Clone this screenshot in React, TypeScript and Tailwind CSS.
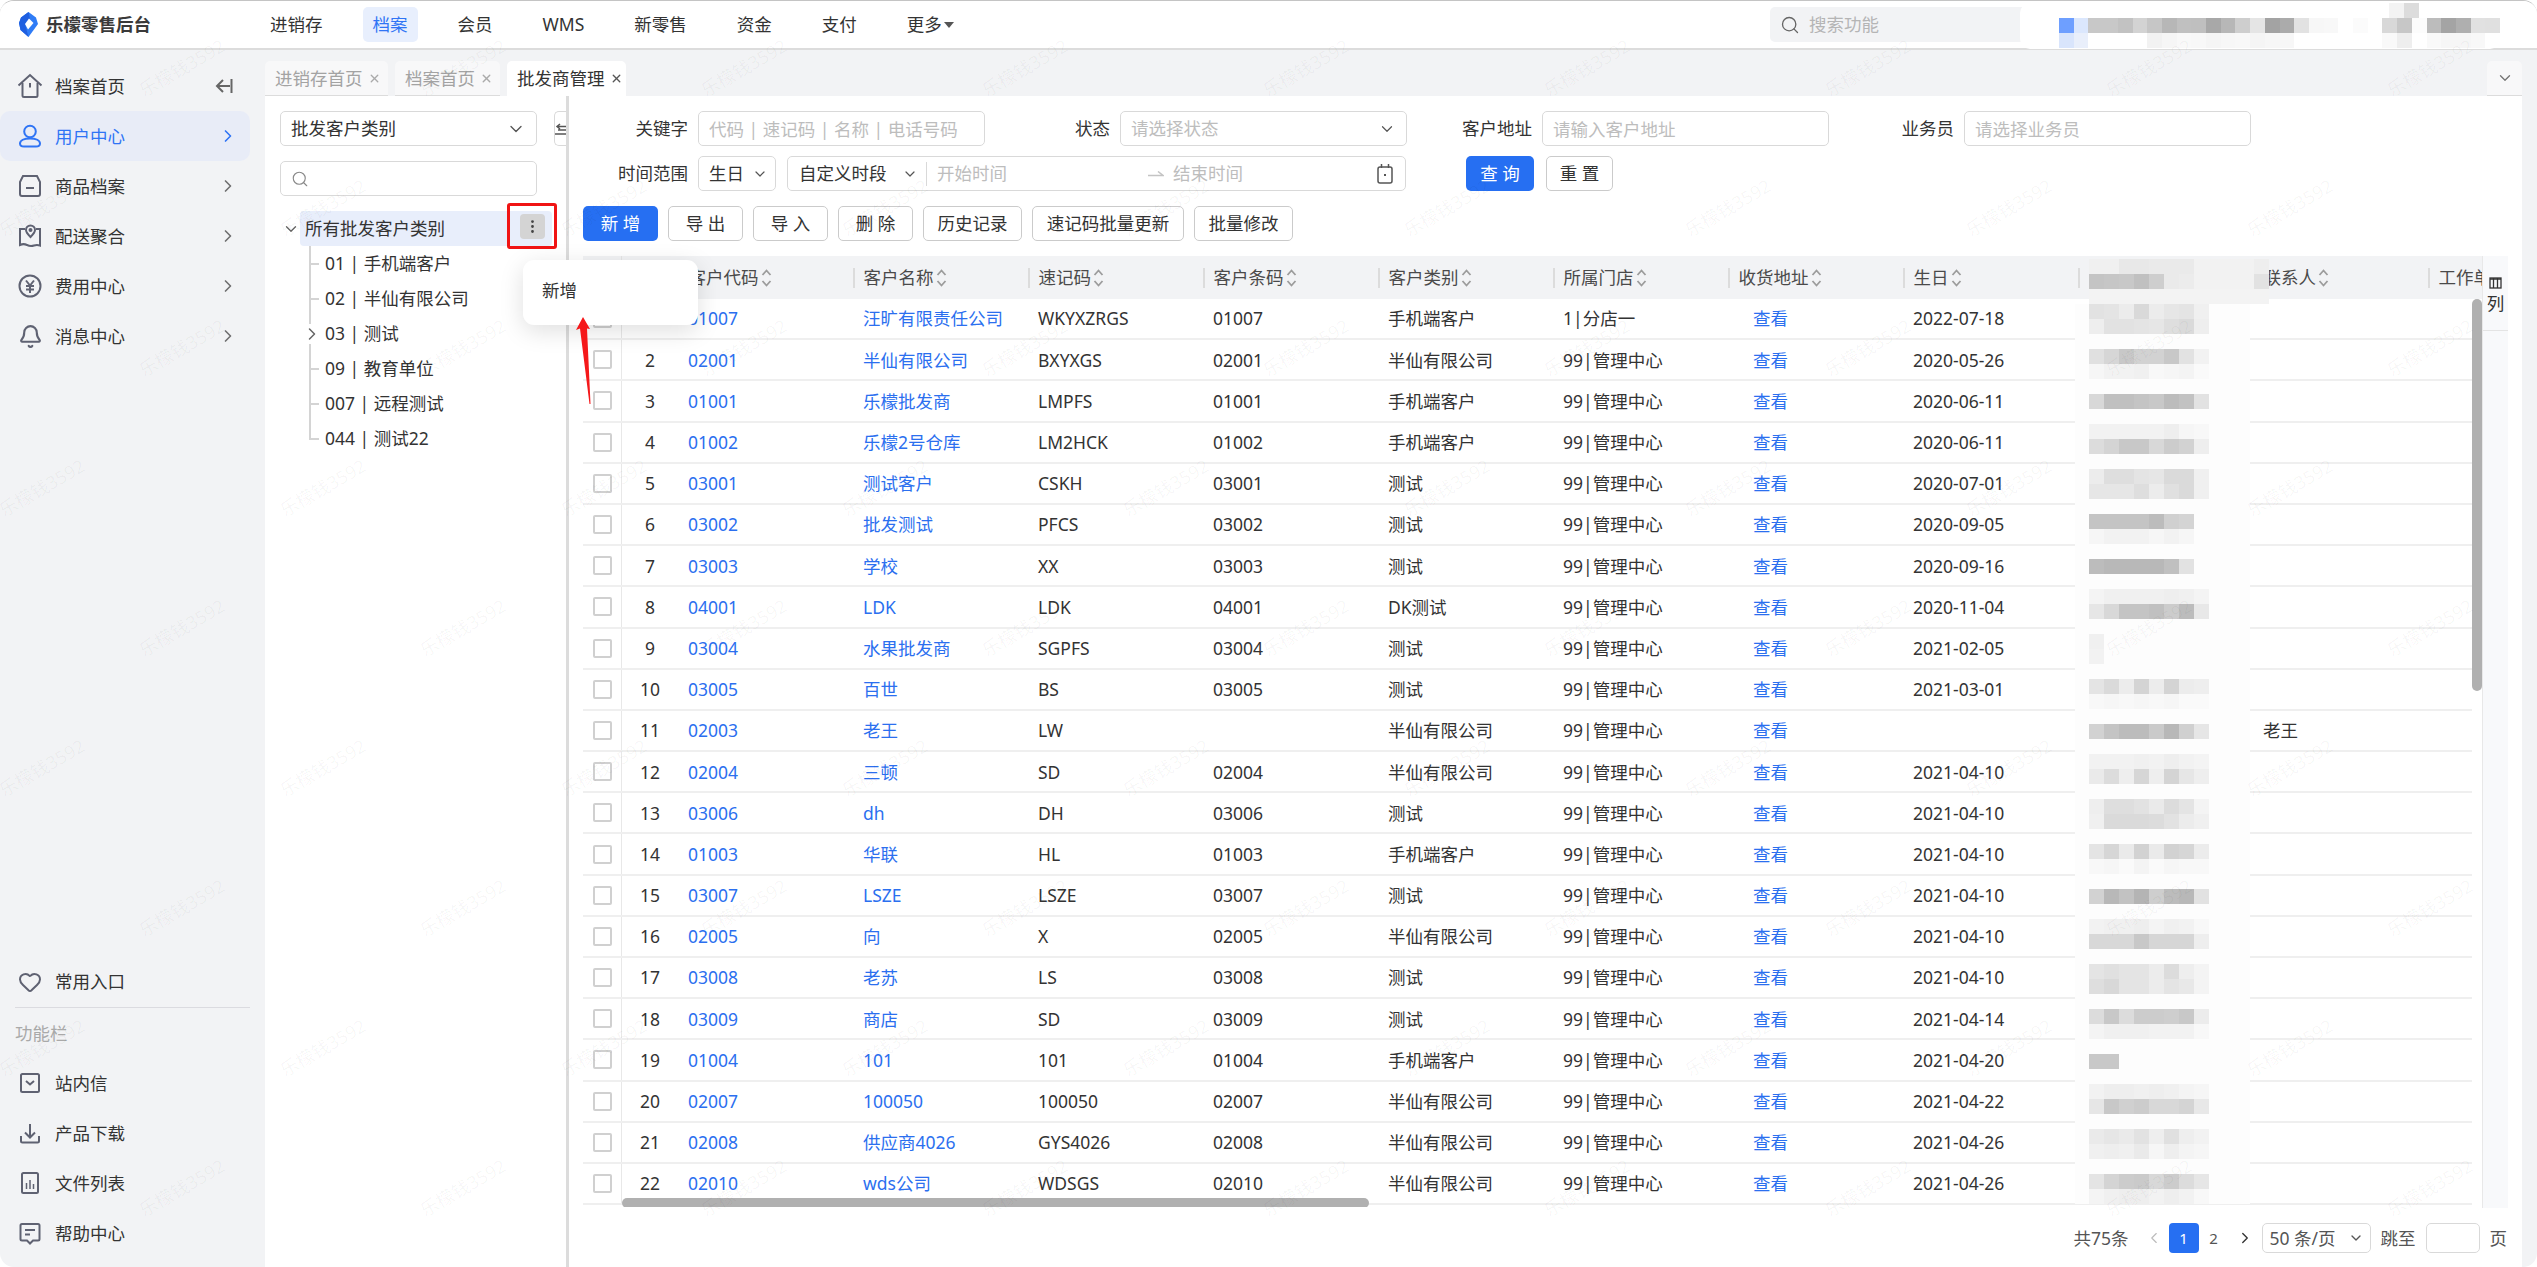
import { Bell, ChevronDown, ChevronRight, ChevronLeft, Heart, MoreVertical, Search, X } from "lucide-react";

const navItems = ["进销存", "档案", "会员", "WMS", "新零售", "资金", "支付"];

const HomeIcon = () => (
  <svg width="26" height="26" viewBox="0 0 26 26" fill="none" stroke="currentColor" strokeWidth="2">
    <path d="M1.5 12.5 13 2l11.5 10.5" />
    <path d="M5.5 10v12.5a1.5 1.5 0 0 0 1.5 1.5h12a1.5 1.5 0 0 0 1.5-1.5V10" />
    <path d="M13 10v4.5" />
  </svg>
);
const UserIcon = () => (
  <svg width="24" height="24" viewBox="0 0 24 24" fill="none" stroke="currentColor" strokeWidth="2">
    <circle cx="12" cy="7.5" r="5.8" />
    <path d="M12 14.5c-6 0-10 2-10 5 0 2.3 2 3 4 3h12c2 0 4-.7 4-3 0-3-4-5-10-5z" />
  </svg>
);
const BoxIcon = () => (
  <svg width="24" height="24" viewBox="0 0 24 24" fill="none" stroke="currentColor" strokeWidth="2">
    <path d="M5 2h14l3 6v12a2 2 0 0 1-2 2H4a2 2 0 0 1-2-2V8z" />
    <path d="M8 14h8" />
  </svg>
);
const MapIcon = () => (
  <svg width="24" height="24" viewBox="0 0 24 24" fill="none" stroke="currentColor" strokeWidth="2">
    <path d="M7 5H2v16c3-1.5 5-1 7 0s4 1.5 7 .5c2-.7 4-.7 6 0V5h-4" />
    <path d="M12.5 13C9.5 10 8 8 8 6a4.5 4.5 0 0 1 9 0c0 2-1.5 4-4.5 7z" />
    <circle cx="12.5" cy="6" r="1" fill="currentColor" />
  </svg>
);
const YenIcon = () => (
  <svg width="24" height="24" viewBox="0 0 24 24" fill="none" stroke="currentColor" strokeWidth="2">
    <circle cx="12" cy="12" r="10.5" />
    <path d="M8 6.5l4 5 4-5M8 12h8M8 15.5h8M12 11.5V19" />
  </svg>
);
const InboxIcon = () => (
  <svg width="24" height="24" viewBox="0 0 24 24" fill="none" stroke="currentColor" strokeWidth="2">
    <rect x="3" y="3" width="18" height="18" rx="1.5" />
    <path d="M8 10l4 3.5 4-3.5" />
  </svg>
);
const DownloadIcon = () => (
  <svg width="24" height="24" viewBox="0 0 24 24" fill="none" stroke="currentColor" strokeWidth="2">
    <path d="M12 3v13M7 11.5l5 5 5-5" />
    <path d="M3 15v5a1.5 1.5 0 0 0 1.5 1.5h15A1.5 1.5 0 0 0 21 20v-5" />
  </svg>
);
const ChartIcon = () => (
  <svg width="24" height="24" viewBox="0 0 24 24" fill="none" stroke="currentColor" strokeWidth="2">
    <rect x="4" y="2" width="16" height="20" rx="1.5" />
    <path d="M8.5 12v6M12 9v9M15.5 13v5" strokeWidth="1.5" />
  </svg>
);
const HelpIcon = () => (
  <svg width="24" height="24" viewBox="0 0 24 24" fill="none" stroke="currentColor" strokeWidth="2">
    <path d="M4 3h16a1.5 1.5 0 0 1 1.5 1.5V18a1.5 1.5 0 0 1-1.5 1.5h-5L12 22.5 9 19.5H4A1.5 1.5 0 0 1 2.5 18V4.5A1.5 1.5 0 0 1 4 3z" />
    <path d="M7 9h10M7 13.5h5" />
  </svg>
);

const Logo = () => (
  <svg width="19" height="25" viewBox="0 0 19 25">
    <path d="M9.5 0 17 5.5l2 6.5-9.5 13L1.5 18 0 11l2-5.5z" fill="#2f7cf6" />
    <path d="M9.5 0 11 7 6 12 9.5 25 1.5 18 0 11l2-5.5z" fill="#1f5fe0" />
    <path d="M10 6.5 14.5 11 9 17.5 6 12z" fill="#fff" />
  </svg>
);

const Sort = () => (
  <svg width="13" height="22" viewBox="0 0 13 22" fill="none" stroke="#9c9c9c" strokeWidth="1.8" className="ml-[1px] shrink-0">
    <path d="M2.5 8 6.5 3.5 10.5 8" />
    <path d="M2.5 14 6.5 18.5 10.5 14" />
  </svg>
);

const sideTop = [
  { label: "用户中心", icon: <UserIcon />, active: true },
  { label: "商品档案", icon: <BoxIcon /> },
  { label: "配送聚合", icon: <MapIcon /> },
  { label: "费用中心", icon: <YenIcon /> },
  { label: "消息中心", icon: <Bell size={25} strokeWidth={2} /> },
];

const sideBottom = [
  { label: "站内信", icon: <InboxIcon /> },
  { label: "产品下载", icon: <DownloadIcon /> },
  { label: "文件列表", icon: <ChartIcon /> },
  { label: "帮助中心", icon: <HelpIcon /> },
];

const treeItems = [
  { label: "01 | 手机端客户" },
  { label: "02 | 半仙有限公司" },
  { label: "03 | 测试", arrow: true },
  { label: "09 | 教育单位" },
  { label: "007 | 远程测试" },
  { label: "044 | 测试22", last: true },
];

const headers = ["客户代码", "客户名称", "速记码", "客户条码", "客户类别", "所属门店", "收货地址", "生日", "电话", "联系人", "工作单位"];

const S = "99|管理中心";
const rows = [
  ["01007", "汪旷有限责任公司", "WKYXZRGS", "01007", "手机端客户", "1|分店一", "2022-07-18", ""],
  ["02001", "半仙有限公司", "BXYXGS", "02001", "半仙有限公司", S, "2020-05-26", ""],
  ["01001", "乐檬批发商", "LMPFS", "01001", "手机端客户", S, "2020-06-11", ""],
  ["01002", "乐檬2号仓库", "LM2HCK", "01002", "手机端客户", S, "2020-06-11", ""],
  ["03001", "测试客户", "CSKH", "03001", "测试", S, "2020-07-01", ""],
  ["03002", "批发测试", "PFCS", "03002", "测试", S, "2020-09-05", ""],
  ["03003", "学校", "XX", "03003", "测试", S, "2020-09-16", ""],
  ["04001", "LDK", "LDK", "04001", "DK测试", S, "2020-11-04", ""],
  ["03004", "水果批发商", "SGPFS", "03004", "测试", S, "2021-02-05", ""],
  ["03005", "百世", "BS", "03005", "测试", S, "2021-03-01", ""],
  ["02003", "老王", "LW", "", "半仙有限公司", S, "", "老王"],
  ["02004", "三顿", "SD", "02004", "半仙有限公司", S, "2021-04-10", ""],
  ["03006", "dh", "DH", "03006", "测试", S, "2021-04-10", ""],
  ["01003", "华联", "HL", "01003", "手机端客户", S, "2021-04-10", ""],
  ["03007", "LSZE", "LSZE", "03007", "测试", S, "2021-04-10", ""],
  ["02005", "向", "X", "02005", "半仙有限公司", S, "2021-04-10", ""],
  ["03008", "老苏", "LS", "03008", "测试", S, "2021-04-10", ""],
  ["03009", "商店", "SD", "03009", "测试", S, "2021-04-14", ""],
  ["01004", "101", "101", "01004", "手机端客户", S, "2021-04-20", ""],
  ["02007", "100050", "100050", "02007", "半仙有限公司", S, "2021-04-22", ""],
  ["02008", "供应商4026", "GYS4026", "02008", "半仙有限公司", S, "2021-04-26", ""],
  ["02010", "wds公司", "WDSGS", "02010", "半仙有限公司", S, "2021-04-26", ""],
];

// blurred phone numbers, one string per 15px line, two hex digits = grey level
const phoneTiles = [
  "e2 e4 ec d9 ec e6 e4 f0", "ee e2 e2 e4 e6 de da ee", "", "e0 d6 c8 d2 d2 c8 e2 f2", "f6 f2 f2 f0 f8 f6 f4 fa", "",
  "d8 c0 c0 c4 c8 bc c2 e2", "", "f2 f2 f2 f2 f2 ee f6 f8", "dc d4 c8 c8 d8 cc d2 ee", "",
  "ec de de e4 e6 da da f0", "e6 e6 e6 de ec e0 da f0", "", "c4 c4 c4 c4 bc d0 d4", "f6 f2 f2 f2 f6 f2 f6", "",
  "bc b8 b8 b8 b8 c0 e2", "", "f4 f0 f0 f0 f0 ee f0 f4", "e6 d8 c4 c4 c0 cc bc e8", "", "f0", "f2", "",
  "e4 da ec d4 ec d4 ec ee", "f8 f6 f8 f6 f8 f6 fa fa", "", "d2 c4 bc bc ca b8 d0 e6", "",
  "f2 f2 f2 f0 f2 ee f2 f4", "ea dc ee d6 ee d4 e6 ee", "", "ee de de e2 ea dc e4 f4", "f0 da da da dc e2 ec f0", "",
  "e4 d6 ea d2 ea d2 d6 ec", "f8 f6 fa f4 fa f6 f8 f8", "", "d2 b8 c2 b4 ce bc b8 e2", "",
  "f2 f0 f0 ee f4 f0 f2 f8", "d8 d8 d8 c8 d6 d6 d6 ee", "", "e4 e0 e4 e4 ec dc ee f4", "de d8 e4 e4 ec e4 e8 f4", "",
  "dc c8 dc cc cc ce c8 ec", "f4 f0 f0 f0 f2 f2 f2 f8", "", "c8 c8", "", "f2 ee ee f0 ee f0 f4 f6", "e6 c8 d0 cc d8 d8 d4 e8", "",
  "ea e6 ea e2 ee e0 ee f2", "f0 ee f0 ea f6 ee f4 f6", "", "e4 d4 cc ca d8 cc dc e6", "f4 f0 ee ee f2 ee f2 f8",
];
const phoneHead = [
  "f0 f0 e8 e8 ea ea ea f2 f2 f2 f2 ee",
  "c4 c6 c8 c0 ce ea ec f2 f2 f2 f2 e2",
  "f3 f3 f3 f3 f3 f3 f3 f3 f3 f3 f3 f3",
];
const topTiles = [
  "ff ff ff ff ff ff ff ff ff ff ff ff ff ff ff ff ff ff ff ff ff ff f3 dc",
  "#6e9fff #dbe7fd c8 c8 c2 d3 c6 b7 c0 bf a8 b7 ce e5 a3 ab e2 f7 f8 ff fb ff d8 c7 fc bc a4 af e1 e0",
  "#d9e5fc #e9effb ff ff ff ff f2 f6 f9 f8 f5 f7 f8 f5 f7 f7 ff ff ff ff ff ff f9 ee ff f9 f6 f6 f8 ff",
];

const Mosaic = ({ lines }: { lines: string[] }) => (
  <div className="flex flex-col">
    {lines.map((line, i) => (
      <div key={i} className="flex h-[15px]">
        {line.split(" ").filter(Boolean).map((t, j) => (
          <div
            key={j}
            className="w-[15px] h-[15px]"
            style={{ backgroundColor: t[0] === "#" ? t : `#${t}${t}${t}` }}
          />
        ))}
      </div>
    ))}
  </div>
);

const Field = ({ placeholder, w = "w-[287px]" }: { placeholder: string; w?: string }) => (
  <input
    placeholder={placeholder}
    className={`${w} h-[35px] border border-[#d9d9d9] rounded-[5px] px-[10px] outline-none placeholder:text-[#bdbdbd]`}
  />
);

const Btn = ({ text, primary, w }: { text: string; primary?: boolean; w: string }) => (
  <button
    className={`${w} h-[35px] rounded-[5px] whitespace-nowrap ${
      primary ? "bg-[#266ff2] text-white" : "border-[1.5px] border-[#cbcbcb] bg-white text-[#333]"
    }`}
  >
    {text}
  </button>
);

const Tab = ({ text, active, w }: { text: string; active?: boolean; w: string }) => (
  <div
    className={`${w} h-[35px] rounded-t-[5px] flex items-center pl-[10px] gap-[5px] ${
      active ? "bg-white text-[#333]" : "bg-[#f8f8f9] text-[#a3a3a3] border-b border-[#dcdcdc]"
    }`}
  >
    <span className="whitespace-nowrap">{text}</span>
    <X size={13} strokeWidth={2.5} className={active ? "text-[#555]" : "text-[#aaa]"} />
  </div>
);

const waterRows = [0, 1, 2, 3, 4, 5, 6, 7, 8, 9];
const waterCols = [-1, 0, 1, 2, 3, 4, 5, 6, 7, 8];

export default function App() {
  return (
    <div className="relative w-[2537px] h-[1267px] overflow-hidden bg-white text-[17.5px] text-[#333] rounded-[14px] border-t border-[#c4c4c4] flex flex-col [font-family:'Noto_Sans','Noto_Sans_CJK_SC',sans-serif]">
      {/* header */}
      <header className="h-[49px] shrink-0 flex items-center border-b-2 border-[#dcdcdc] bg-white relative">
        <div className="w-[260px] pl-[19px] flex items-center gap-[8px] shrink-0">
          <Logo />
          <span className="font-bold text-[17.5px] text-[#3a3a3a]">乐檬零售后台</span>
        </div>
        <nav className="flex items-center gap-[30px]">
          {navItems.map((n) => (
            <div
              key={n}
              className={`h-[35px] px-[10px] flex items-center rounded-[5px] ${n === "档案" ? "bg-[#e8effd] text-[#2f74f5]" : ""}`}
            >
              {n}
            </div>
          ))}
          <div className="h-[35px] px-[10px] flex items-center">
            更多
            <svg width="10" height="6" viewBox="0 0 10 6" className="ml-[2px]"><path d="M0 0h10L5 6z" fill="#555" /></svg>
          </div>
        </nav>
        <div className="ml-auto mr-[507px] w-[260px] h-[35px] rounded-[5px] bg-[#f2f3f5] flex items-center pl-[10px] gap-[9px] text-[#b5b5b5]">
          <Search size={20} strokeWidth={1.6} className="text-[#666]" />
          搜索功能
        </div>
        <div className="absolute left-[2020px] top-[2px] w-[480px] h-[46px] bg-white rounded-[10px] pl-[39px] pt-[0px]">
          <Mosaic lines={topTiles} />
        </div>
      </header>

      <div className="flex flex-1 min-h-0">
        {/* sidebar */}
        <aside className="w-[265px] shrink-0 bg-[#f2f3f5] flex flex-col justify-between pt-[11px] pb-[9px]">
          <div className="flex flex-col">
            <div className="h-[50px] w-[250px] flex items-center pl-[17px] pr-[17px]">
              <span className="w-[38px] text-[#5f6272] shrink-0"><HomeIcon /></span>
              档案首页
              <svg width="18" height="16" viewBox="0 0 18 16" fill="none" stroke="#666" strokeWidth="2" className="ml-auto">
                <path d="M8 2 2 8l6 6M2 8h13M16.5 1v14" />
              </svg>
            </div>
            {sideTop.map((s) => (
              <div
                key={s.label}
                className={`h-[50px] w-[250px] flex items-center pl-[18px] pr-[12px] rounded-[10px] ${s.active ? "bg-[#e8ecf7] text-[#2f74f5]" : ""}`}
              >
                <span className={`w-[37px] shrink-0 ${s.active ? "text-[#2f74f5]" : "text-[#5f6272]"}`}>{s.icon}</span>
                {s.label}
                <ChevronRight size={20} strokeWidth={2} className={`ml-auto ${s.active ? "text-[#2f74f5]" : "text-[#707070]"}`} />
              </div>
            ))}
          </div>
          <div className="flex flex-col">
            <div className="h-[50px] flex items-center pl-[18px]">
              <span className="w-[37px] text-[#5f6272]"><Heart size={24} strokeWidth={2} /></span>
              常用入口
            </div>
            <div className="mx-[15px] h-[1.5px] bg-[#dbdbe0]" />
            <div className="h-[50px] flex items-center pl-[15px] text-[#a9a9a9]">功能栏</div>
            {sideBottom.map((s) => (
              <div key={s.label} className="h-[50px] flex items-center pl-[18px]">
                <span className="w-[37px] text-[#5f6272]">{s.icon}</span>
                {s.label}
              </div>
            ))}
          </div>
        </aside>

        <main className="flex-1 min-w-0 bg-[#f2f3f5] flex flex-col pr-[15px]">
          {/* tabs */}
          <div className="h-[46px] shrink-0 pt-[11px] flex gap-[7px]">
            <Tab text="进销存首页" w="w-[123px]" />
            <Tab text="档案首页" w="w-[105px]" />
            <Tab text="批发商管理" active w="w-[119px]" />
            <div className="ml-auto w-[35px] h-[35px] rounded-t-[5px] bg-[#f8f8f9] border-b border-[#dcdcdc] flex items-center justify-center text-[#777]">
              <ChevronDown size={18} strokeWidth={1.8} />
            </div>
          </div>

          <div className="flex-1 min-h-0 bg-white flex">
            {/* category tree */}
            <div className="w-[304px] shrink-0 border-r-[3px] border-[#dcdcdc] pt-[15px]">
              <div className="flex pl-[15px]">
                <div className="w-[257px] h-[35px] border border-[#d9d9d9] rounded-[5px] flex items-center justify-between pl-[10px] pr-[10px]">
                  批发客户类别
                  <ChevronDown size={20} strokeWidth={1.6} className="text-[#555]" />
                </div>
                <div className="ml-[17px] w-[12px] h-[35px] border border-r-0 border-[#d9d9d9] rounded-l-[5px] flex items-center overflow-hidden">
                  <svg width="11" height="12" viewBox="0 0 11 12" fill="none" stroke="#555" strokeWidth="1.5">
                    <path d="M5 1 2 3.5 5 6M3 3.5h8M3 7h8M0 11h11" />
                  </svg>
                </div>
              </div>
              <div className="ml-[15px] mt-[15px] w-[257px] h-[35px] border border-[#d9d9d9] rounded-[5px] flex items-center pl-[10px]">
                <Search size={18} strokeWidth={1.5} className="text-[#888]" />
              </div>
              <div className="mt-[15px] flex items-center h-[35px] pl-[17px]">
                <ChevronDown size={20} strokeWidth={1.8} className="text-[#666] w-[18px]" />
                <div className="w-[252px] h-[35px] bg-[#e8eefb] rounded-[4px] pl-[5px] flex items-center">所有批发客户类别</div>
              </div>
              <div className="pl-[44px]">
                {treeItems.map((t) => (
                  <div key={t.label} className="relative h-[35px] flex items-center pl-[16px]">
                    <span className={`absolute left-0 top-0 w-[1.5px] bg-[#d4d4d4] ${t.last ? "h-[18px]" : "h-[35px]"}`} />
                    {t.arrow ? (
                      <ChevronRight size={20} strokeWidth={1.8} className="absolute -left-[7px] text-[#666] bg-white" />
                    ) : (
                      <span className="absolute left-0 top-[17px] w-[10px] h-[1.5px] bg-[#d4d4d4]" />
                    )}
                    {t.label}
                  </div>
                ))}
              </div>
            </div>

            {/* right panel */}
            <div className="flex-1 min-w-0 pt-[15px] flex flex-col">
              <div className="grid grid-cols-[129px_287px_135px_287px_135px_287px_135px_287px] gap-y-[10px] items-center">
                <label className="text-right pr-[10px]">关键字</label>
                <Field placeholder="代码 | 速记码 | 名称 | 电话号码" />
                <label className="text-right pr-[10px]">状态</label>
                <div className="h-[35px] border border-[#d9d9d9] rounded-[5px] flex items-center justify-between px-[10px] text-[#bdbdbd]">
                  请选择状态
                  <ChevronDown size={18} strokeWidth={1.6} className="text-[#555]" />
                </div>
                <label className="text-right pr-[10px]">客户地址</label>
                <Field placeholder="请输入客户地址" />
                <label className="text-right pr-[10px]">业务员</label>
                <Field placeholder="请选择业务员" />

                <label className="text-right pr-[10px]">时间范围</label>
                <div className="col-span-3 flex gap-[11px]">
                  <div className="w-[78px] h-[35px] border border-[#d9d9d9] rounded-[5px] flex items-center justify-between pl-[10px] pr-[7px]">
                    生日
                    <ChevronDown size={16} strokeWidth={1.8} className="text-[#555]" />
                  </div>
                  <div className="w-[619px] h-[35px] border border-[#d9d9d9] rounded-[5px] flex items-center pl-[11px] pr-[12px]">
                    <div className="w-[128px] flex items-center justify-between pr-[8px] border-r border-[#d9d9d9] h-[24px]">
                      自定义时段
                      <ChevronDown size={16} strokeWidth={1.8} className="text-[#555]" />
                    </div>
                    <span className="ml-[10px] w-[211px] text-[#bdbdbd]">开始时间</span>
                    <svg width="16" height="6" viewBox="0 0 16 6" className="mr-[9px]"><path d="M0 4.5h15L10 0.5" fill="none" stroke="#c4c4c4" strokeWidth="1.5" /></svg>
                    <span className="text-[#bdbdbd]">结束时间</span>
                    <svg width="16" height="20" viewBox="0 0 16 20" fill="none" stroke="#555" strokeWidth="1.5" className="ml-auto">
                      <rect x="1" y="3" width="14" height="16" rx="2" />
                      <path d="M4.5 0v4M11.5 0v4" />
                      <rect x="7" y="10" width="2" height="2" fill="#555" stroke="none" />
                    </svg>
                  </div>
                </div>
                <div className="col-span-4 flex gap-[12px] pl-[59px]">
                  <Btn text="查 询" primary w="w-[68px]" />
                  <Btn text="重 置" w="w-[67px]" />
                </div>
              </div>

              <div className="mt-[15px] pl-[14px] flex gap-[10px]">
                <Btn text="新 增" primary w="w-[75px]" />
                <Btn text="导 出" w="w-[75px]" />
                <Btn text="导 入" w="w-[75px]" />
                <Btn text="删 除" w="w-[75px]" />
                <Btn text="历史记录" w="w-[99px]" />
                <Btn text="速记码批量更新" w="w-[152px]" />
                <Btn text="批量修改" w="w-[99px]" />
              </div>

              {/* table */}
              <div className="mt-[15px] pl-[14px] flex h-[951px]">
                <div className="relative w-[1899px] flex flex-col overflow-hidden">
                  <div className="h-[43px] shrink-0 bg-[#f2f3f5] flex items-center text-[#4a4a4a]">
                    <div className="w-[39px] h-full shrink-0 border-r border-[#e6e6e6]" />
                    <div className="w-[56px] shrink-0" />
                    {headers.map((h) => (
                      <div key={h} className="w-[175px] shrink-0 flex items-center">
                        <span className="w-[1.5px] h-[20px] bg-[#dcdcdc] shrink-0" />
                        <span className="pl-[9px] whitespace-nowrap">{h}</span>
                        <Sort />
                      </div>
                    ))}
                  </div>
                  <div className="flex flex-1 min-h-0">
                    <div className="w-[1889px] overflow-hidden">
                      {rows.map((r, i) => (
                        <div key={i} className="h-[41.2px] w-[2400px] flex items-center border-b-2 border-[#efefef]">
                          <div className="w-[39px] h-full shrink-0 flex items-center justify-center border-r border-[#e8e8e8]">
                            <span className="w-[19px] h-[19px] border-2 border-[#d0d0d0] rounded-[2px] bg-white" />
                          </div>
                          <div className="w-[56px] shrink-0 text-center">{i + 1}</div>
                          <div className="w-[175px] shrink-0 pl-[10px] text-[#2b6fef]">{r[0]}</div>
                          <div className="w-[175px] shrink-0 pl-[10px] text-[#2b6fef]">{r[1]}</div>
                          <div className="w-[175px] shrink-0 pl-[10px]">{r[2]}</div>
                          <div className="w-[175px] shrink-0 pl-[10px]">{r[3]}</div>
                          <div className="w-[175px] shrink-0 pl-[10px]">{r[4]}</div>
                          <div className="w-[175px] shrink-0 pl-[10px]">{r[5]}</div>
                          <div className="w-[175px] shrink-0 pl-[25px] text-[#2b6fef]">查看</div>
                          <div className="w-[175px] shrink-0 pl-[10px]">{r[6]}</div>
                          <div className="w-[175px] shrink-0" />
                          <div className="w-[175px] shrink-0 pl-[10px]">{r[7]}</div>
                        </div>
                      ))}
                    </div>
                    <div className="w-[10px] shrink-0">
                      <div className="h-[392px] bg-[#b0b0b0] rounded-[5px]" />
                    </div>
                  </div>
                  {/* horizontal thumb */}
                  <div className="absolute left-[39px] top-[942px] w-[747px] h-[10px] rounded-[5px] bg-[#b0b0b0]" />
                </div>
                <div className="w-[26px] shrink-0 bg-[#f8f9fb] border-l border-[#e8e8e8] flex flex-col items-center h-[952px]">
                  <div className="mt-[20px] w-full flex flex-col items-center border-b border-[#e4e4e4] pb-[15px]">
                    <svg width="13" height="13" viewBox="0 0 13 13" fill="none" stroke="#333" strokeWidth="1.3">
                      <rect x="1" y="2" width="11" height="10" />
                      <path d="M1 3h11M4.5 2v10M8.5 2v10" />
                    </svg>
                    <span className="mt-[2px] leading-[24px]">列</span>
                  </div>
                </div>
              </div>

              {/* pagination */}
              <div className="mt-[16px] h-[30px] pr-[15px] flex items-center justify-end text-[#555]">
                <span>共75条</span>
                <ChevronLeft size={18} strokeWidth={1.5} className="ml-[16px] text-[#bbb]" />
                <span className="ml-[6px] w-[30px] h-[30px] rounded-[4px] bg-[#266ff2] text-white flex items-center justify-center text-[15px]">1</span>
                <span className="w-[30px] text-center text-[15px]">2</span>
                <ChevronRight size={18} strokeWidth={1.8} className="ml-[7px] text-[#333]" />
                <div className="ml-[8px] w-[109px] h-[30px] border border-[#d9d9d9] rounded-[5px] flex items-center justify-between pl-[7px] pr-[6px]">
                  50 条/页
                  <ChevronDown size={16} strokeWidth={2} className="text-[#555]" />
                </div>
                <span className="ml-[10px]">跳至</span>
                <div className="ml-[10px] w-[54px] h-[30px] border border-[#d9d9d9] rounded-[5px]" />
                <span className="ml-[10px]">页</span>
              </div>
            </div>
          </div>
        </main>
      </div>

      {/* blurred phone column */}
      <div className="absolute left-[2079px] top-[258px] pl-[10px] pointer-events-none">
        <Mosaic lines={phoneHead} />
      </div>
      <div className="absolute left-[2075px] top-[303px] w-[175px] h-[900px] bg-[#fdfdfd] pl-[14px] pointer-events-none">
        <Mosaic lines={phoneTiles} />
      </div>

      {/* red marker around the row menu */}
      <div className="absolute left-[507px] top-[202px] w-[50px] h-[46px] border-[3px] border-[#f01414] rounded-[3px] flex items-center justify-center">
        <div className="w-[25px] h-[25px] rounded-[4px] bg-[#d4d4d4] flex items-center justify-center">
          <MoreVertical size={17} strokeWidth={2} className="text-[#444]" />
        </div>
      </div>

      {/* dropdown */}
      <div className="absolute left-[523px] top-[259px] w-[175px] h-[65px] bg-white rounded-[11px] shadow-[0_6px_24px_rgba(0,0,0,0.13)] flex items-center pl-[19px] pb-[4px]">
        新增
      </div>

      <svg className="absolute left-[570px] top-[310px]" width="30" height="100" viewBox="0 0 30 100">
        <path d="M13 6 20 18 17 17.500 20.500 93 19.500 93 10 17.500 6 19z" fill="#f5181a" />
      </svg>

      {/* watermark */}
      <div className="absolute inset-0 pointer-events-none overflow-hidden">
        {waterRows.map((r) =>
          waterCols.map((c) => (
            <span
              key={`${r}-${c}`}
              className="absolute -rotate-[30deg] whitespace-nowrap text-[18px] text-black/[0.04] -translate-x-1/2 -translate-y-1/2"
              style={{ left: 182 + 281 * c - (r % 2 ? 140 : 0), top: 67 + 140 * r }}
            >
              乐檬钱3592
            </span>
          ))
        )}
      </div>
    </div>
  );
}
